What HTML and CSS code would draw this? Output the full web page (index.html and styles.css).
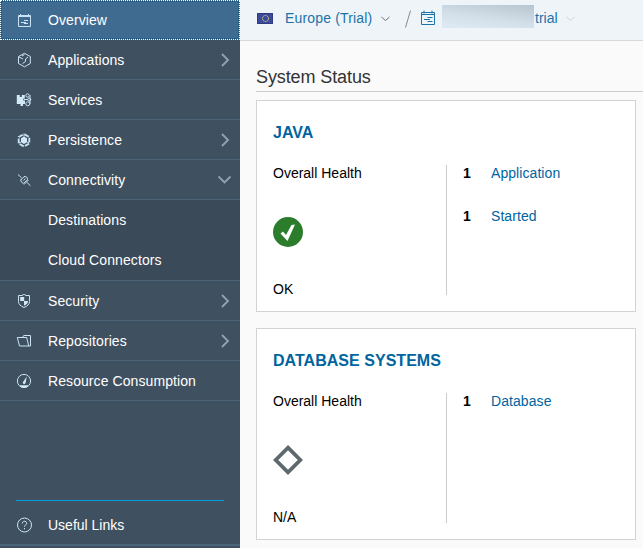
FILE: index.html
```html
<!DOCTYPE html>
<html lang="en">
<head>
<meta charset="utf-8">
<title>Overview</title>
<link rel="stylesheet" href="styles.css">
</head>
<body>
<div class="app">
  <nav class="side">
    <a class="item selected">
      <svg class="icon" viewBox="0 0 16 16"><path d="M2.500 3.500h12v11h-12zM2.500 4.500h12M4.500 2v2M12.500 2v2M8 8.500h4M5 10.500h5M8 11.500h4"/></svg>
      <span class="label">Overview</span>
    </a>
    <a class="item">
      <svg class="icon" viewBox="0 0 16 16"><path d="M2.500 4.500L8.500 1.300l5.800 3.200v7L8.500 14.800l-6-3.300zM3 5l4 2M6 4l2.500-1.500M6.500 11.500l3-2V7l2.500-2"/></svg>
      <span class="label">Applications</span>
      <svg class="arrow" viewBox="0 0 14 14"><path d="M4 1l6 6-6 6"/></svg>
    </a>
    <a class="item">
      <svg class="icon" viewBox="0 0 16 16"><path class="fill" d="M.8 3h3v2h2V3h3v3.500h-1.500v2H9V12H7v2H4.500v-2H.8z"/><circle cx="11.500" cy="3.500" r="1.700"/><circle cx="13.300" cy="7.500" r="1.500"/><circle cx="11.800" cy="11.800" r="2"/><path d="M8 7.500h4M14 3v9"/></svg>
      <span class="label">Services</span>
    </a>
    <a class="item">
      <svg class="icon" viewBox="0 0 16 16"><path d="M8 2l5.300 3v6.500L8 14.500l-5.300-3V5z" stroke-width="1.800"  stroke-dasharray="4.700 1.400" stroke-dashoffset="-.7"/><path class="fill" d="M8 4.500l3 1.800v4L8 12l-3-1.700v-4z"/><path d="M8 1.500v3M3 11l2-1M13 11l-2-1"/></svg>
      <span class="label">Persistence</span>
      <svg class="arrow" viewBox="0 0 14 14"><path d="M4 1l6 6-6 6"/></svg>
    </a>
    <a class="item">
      <svg class="icon" viewBox="0 0 16 16"><path d="M2 2.500l3.500 3.200M11 10.500l3.500 3.300M4.500 8l4.500-4M5.300 7.200c-1 2 .2 4 2.400 4l3.800-3.500c.3-2.200-1.500-3.800-3.500-3M8 12.500L12.500 8M7.500 8.500l2-2"/></svg>
      <span class="label">Connectivity</span>
      <svg class="arrow" viewBox="0 0 14 14"><path d="M.5 3.500l6 6 6-6"/></svg>
    </a>
    <div class="sub">
      <a class="subitem">Destinations</a>
      <a class="subitem">Cloud Connectors</a>
    </div>
    <a class="item">
      <svg class="icon" viewBox="0 0 16 16"><path d="M8 1.300l2 1.200h3.500v6c0 3-2.200 4.500-5.500 6-3.300-1.500-5.500-3-5.500-6v-6H6z"/><path class="fill" d="M4.200 4h4v4h-4zM8 8h4c0 2.200-1.200 3.600-4 4.800z"/></svg>
      <span class="label">Security</span>
      <svg class="arrow" viewBox="0 0 14 14"><path d="M4 1l6 6-6 6"/></svg>
    </a>
    <a class="item">
      <svg class="icon" viewBox="0 0 16 16"><path d="M1.300 4.500h9.400l2 8.500H3.500zM6.500 4.500l1.200-2h6.800v10.500h-2"/></svg>
      <span class="label">Repositories</span>
      <svg class="arrow" viewBox="0 0 14 14"><path d="M4 1l6 6-6 6"/></svg>
    </a>
    <a class="item">
      <svg class="icon" viewBox="0 0 16 16"><circle cx="8" cy="8" r="6.600"/><path class="fill" d="M10.800 3.500L9.500 10.200a1.500 1.500 0 0 1-2.800-.7zM3.500 12.200h9L10.500 14.500h-5z"/></svg>
      <span class="label">Resource Consumption</span>
    </a>
    <div class="links">
      <a class="item">
        <svg class="icon" viewBox="0 0 16 16"><circle cx="8.500" cy="8" r="7"/><path d="M6.300 6.500c0-3 4.400-3 4.400-.3 0 1.800-2.200 1.500-2.200 3.500M8.500 11v1.200"/></svg>
        <span class="label">Useful Links</span>
      </a>
    </div>
  </nav>
  <main class="main">
    <header class="crumbs">
      <svg class="flag" viewBox="0 0 16 11"><path fill="#3c4a9c" d="M0 0h16v11H0z"/><path fill="none" stroke="#2f3a80" d="M.5.5h15v10H.5z"/><circle cx="8.500" cy="5.500" r="3" fill="none" stroke="#e6dc6c" stroke-dasharray="1.300 .6"/></svg>
      <a class="region">Europe (Trial)</a>
      <svg class="caret" viewBox="0 0 9 6"><path d="M.5 1l4 3.500 4-3.500"/></svg>
      <svg class="slash" viewBox="0 0 8 18"><path d="M1.500 17.500L6.500.5"/></svg>
      <svg class="account" viewBox="0 0 16 16"><path d="M1.500 2.500h13v12h-13zM1.500 4.500h13M4 .5v3M12 .5v3M7.500 7.500h5M4 9.500h6M7.500 11.500h5"/></svg>
      <span class="masked"></span>
      <a class="trial">trial</a>
      <svg class="caret faint" viewBox="0 0 9 6"><path d="M.5 1l4 3.500 4-3.500"/></svg>
    </header>
    <h1 class="title">System Status</h1>
    <section class="card">
      <h2 class="name java">JAVA</h2>
      <div class="cols">
        <div class="health">
          <span>Overall Health</span>
          <svg class="state" viewBox="0 0 30 30"><circle cx="15" cy="15" r="15" fill="#2b7d2b"/><path fill="#fff" d="M7.500 16.500L10 14.500l3 3.500L18.500 8l3.500-.5L14.500 24z"/></svg>
          <span>OK</span>
        </div>
        <div class="stats">
          <b>1</b><a>Application</a>
          <b>1</b><a>Started</a>
        </div>
      </div>
    </section>
    <section class="card">
      <h2 class="name">DATABASE SYSTEMS</h2>
      <div class="cols">
        <div class="health">
          <span>Overall Health</span>
          <svg class="state" viewBox="0 0 30 30"><path fill="none" stroke="#5e696e" stroke-width="3.800" d="M15 2.700L27.300 15 15 27.300 2.700 15z"/></svg>
          <span>N/A</span>
        </div>
        <div class="stats">
          <b>1</b><a>Database</a>
        </div>
      </div>
    </section>
  </main>
</div>
</body>
</html>
```
FILE: styles.css
```css
* { box-sizing: border-box; }
body { margin: 0; font: 14px/16px "Liberation Sans", Arial, sans-serif; color: #000; }
.app { display: flex; width: 643px; height: 548px; overflow: hidden; background: #fafafa; }
.side { width: 240px; height: 548px; flex: none; display: flex; flex-direction: column; background: #3f5161; color: #fff; }
.item { flex: none; display: flex; align-items: center; height: 40px; padding: 1px 8px 0 16px; border-bottom: 1px solid #4c6478; }
.selected { background: #406b91; border: 1px dotted #fff; outline: 1px dotted #17547e; outline-offset: -2px; padding: 0 7px 0 15px; }
.label { flex: 1; margin-left: 16px; letter-spacing: .08px; }
.icon { width: 16px; height: 16px; fill: none; stroke: #c9e3f5; stroke-width: 1; }
.icon .fill { fill: #d2e9f8; stroke: none; }
.arrow { width: 14px; height: 14px; fill: none; stroke: #91a4b4; stroke-width: 1.8; }
.sub { flex: none; height: 81px; background: #3a4a59; border-bottom: 1px solid #4c6478; }
.subitem { display: block; height: 40px; padding: 12px 0 0 48px; letter-spacing: .1px; }
.links { margin-top: auto; margin-bottom: 2px; }
.links::before { content: ""; display: block; height: 1px; margin: 0 16px 4px; background: #009de0; }
.links .item { height: 41px; border-bottom: 2px solid #4c6478; }
.links .label { letter-spacing: 0; }
.main { flex: 1; min-width: 0; }
.crumbs { display: flex; align-items: center; height: 41px; padding: 0 0 4px 17px; background: #eff4f9; border-bottom: 1px solid #d5d9dc; color: #1c73a6; }
.flag { width: 16px; height: 11px; }
.region { width: 88px; margin-left: 12px; letter-spacing: .16px; white-space: nowrap; }
.caret { width: 9px; height: 6px; margin: 2px 0 0 8px; fill: none; stroke: #65727d; }
.slash { width: 8px; height: 18px; margin: 2px 0 0 14px; fill: none; stroke: #888; }
.account { width: 16px; height: 16px; margin-left: 8px; fill: none; stroke: #1c73a6; }
.masked { width: 92px; height: 23px; margin-left: 6px; margin-top: -3px; background: linear-gradient(8deg, #dce8f2 10%, #d2dee8 45%, #b9c5ce 100%); }
.trial { margin-left: 1px; }
.caret.faint { margin-left: 8px; stroke: #cbd2d7; }
.title { height: 51px; margin: 0 0 8px 16px; padding-top: 25px; border-bottom: 1px solid #ccc; font-size: 18px; line-height: 22px; font-weight: 400; color: #333; letter-spacing: -.1px; }
.card { width: 380px; height: 212px; margin: 0 0 16px 16px; padding: 22px 16px 0; border: 1px solid #d3d3d3; background: #fff; }
.name { margin: 0; height: 42px; font-size: 16px; line-height: 20px; color: #0064a0; letter-spacing: .03px; }
.java { letter-spacing: 0; }
.cols { display: flex; height: 130px; }
.health { width: 174px; border-right: 1px solid #ccc; display: flex; flex-direction: column; }
.state { flex: none; width: 30px; height: 30px; margin: 36px 0 34px; }
.stats { display: grid; grid-template-columns: 28px auto; grid-auto-rows: 43px; margin-left: 16px; align-content: start; }
.stats a { color: #0064a0; letter-spacing: .07px; }
```
